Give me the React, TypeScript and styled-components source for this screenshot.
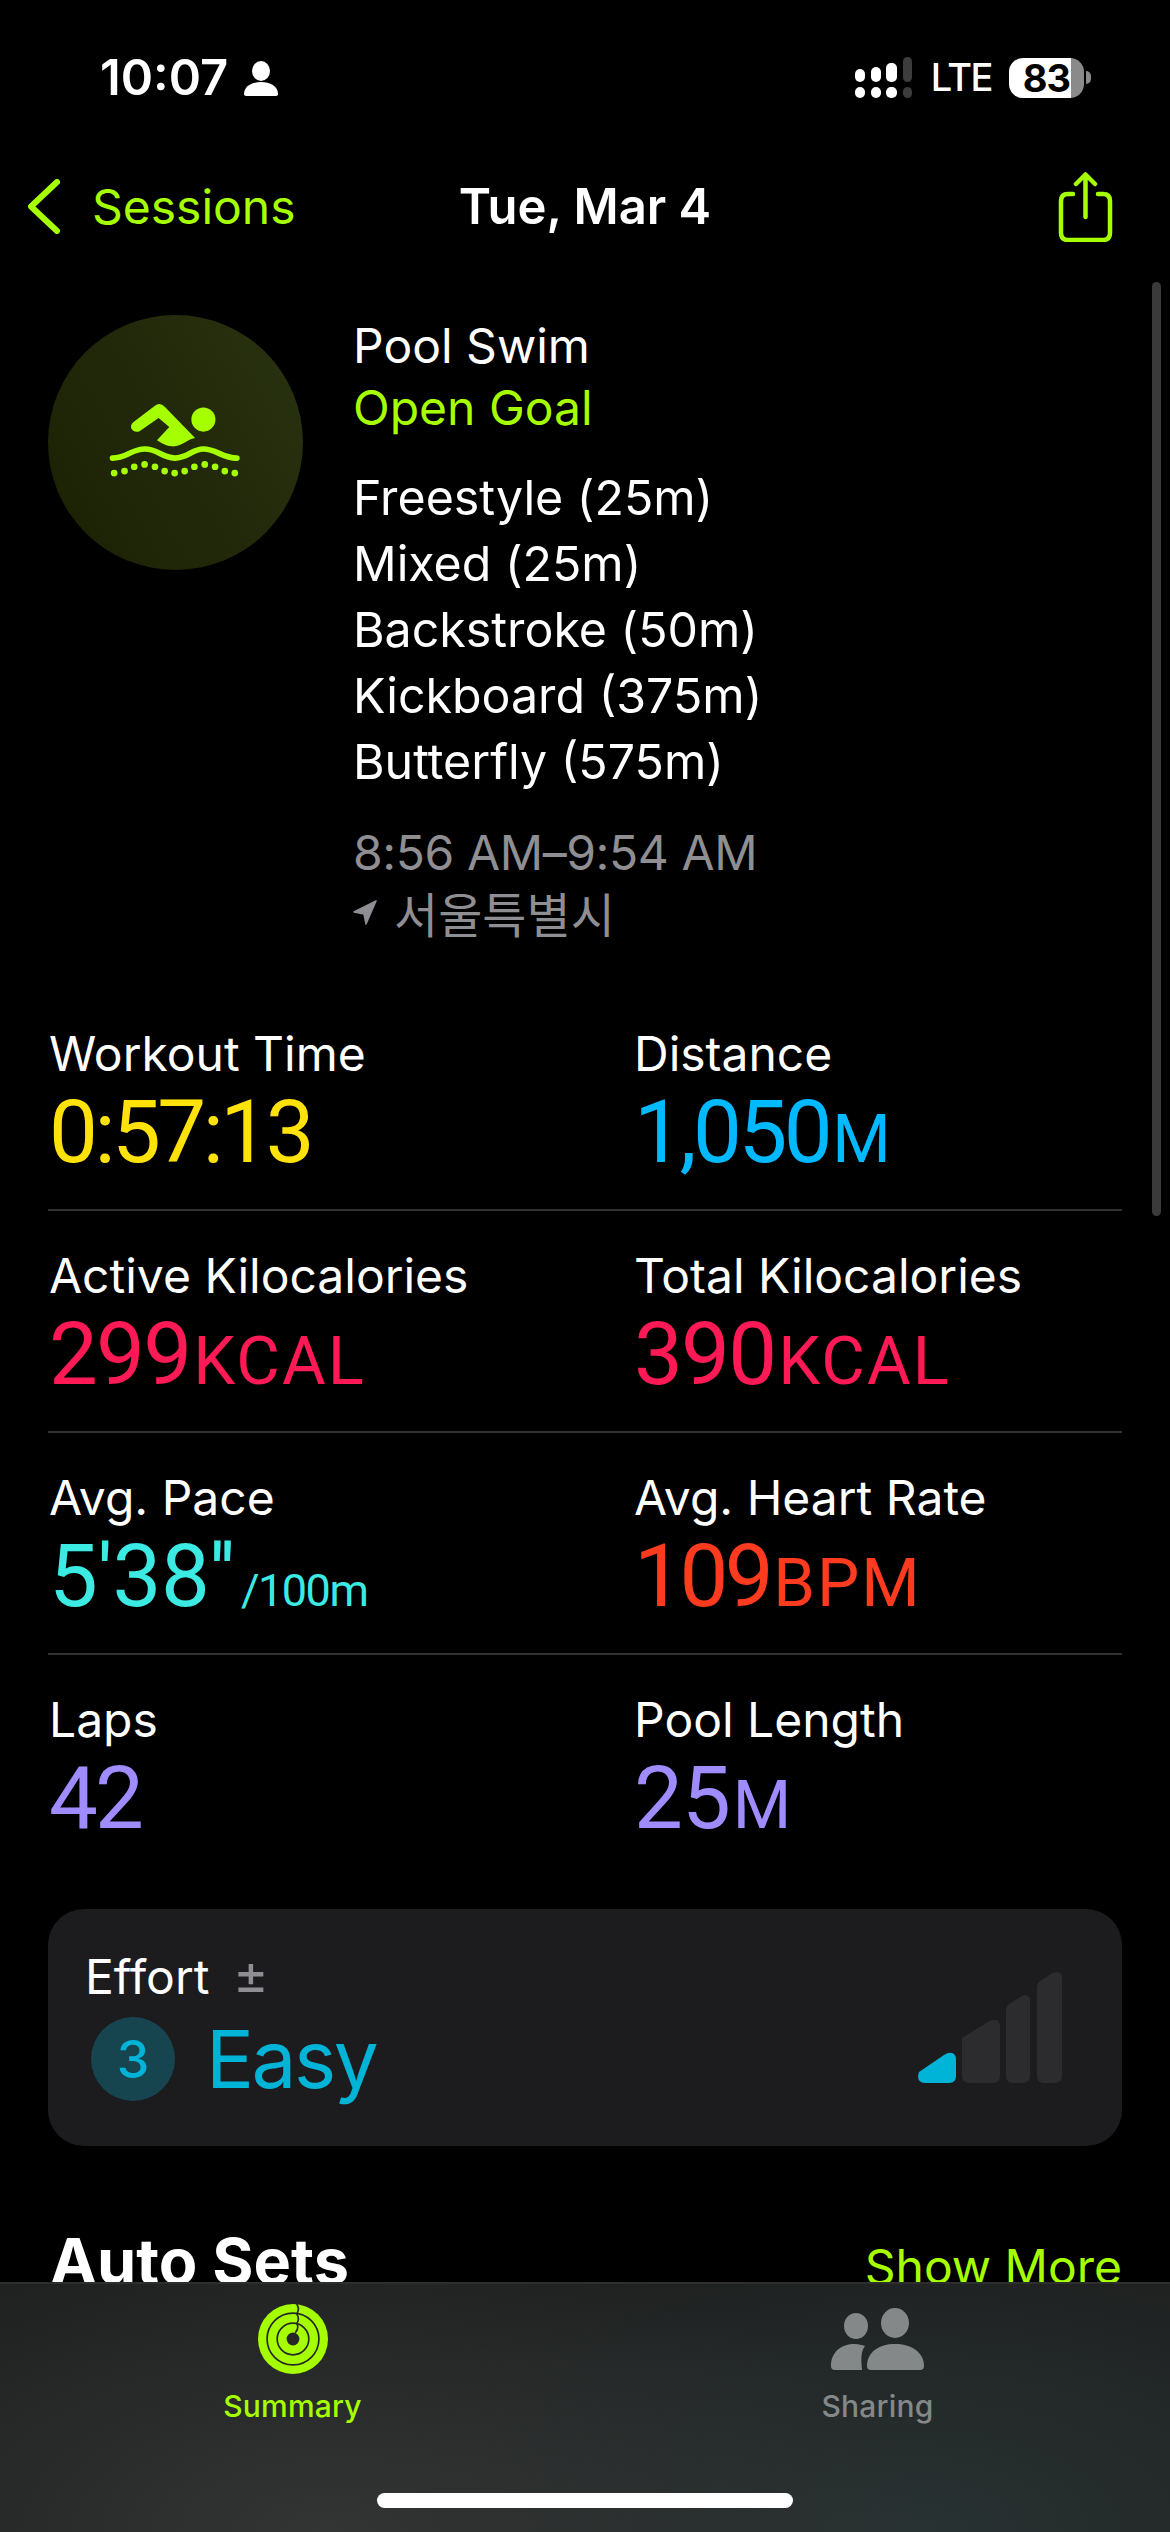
import React from "react";
import styled, { createGlobalStyle } from "styled-components";

const GREEN = "#a6ff00";
const SANS = `Inter, "Noto Sans CJK KR", sans-serif`;
const NUM = `Roboto, Inter, sans-serif`;

const strokes = ["Freestyle (25m)", "Mixed (25m)", "Backstroke (50m)", "Kickboard (375m)", "Butterfly (575m)"];

const metricRows = [
  [
    { label: "Workout Time", value: "0:57:13", unit: "", color: "#ffe20a", track: -3.5 },
    { label: "Distance", value: "1,050", unit: "M", color: "#00b9ff", track: -3.5 },
  ],
  [
    { label: "Active Kilocalories", value: "299", unit: "KCAL", color: "#ff1a55", track: -1.8 },
    { label: "Total Kilocalories", value: "390", unit: "KCAL", color: "#ff1a55", track: -1.8 },
  ],
  [
    { label: "Avg. Pace", value: "5'38''", unit: "", per: "/100m", color: "#3ceae4", track: -0.3 },
    { label: "Avg. Heart Rate", value: "109", unit: "BPM", color: "#ff3b1f", track: -3.5 },
  ],
  [
    { label: "Laps", value: "42", unit: "", color: "#a08cff", track: -3 },
    { label: "Pool Length", value: "25", unit: "M", color: "#a08cff", track: -1 },
  ],
];

const dots = [
  [253, 548], [284, 542], [313, 529], [344, 522], [375, 529], [404, 542], [434, 548],
  [464, 542], [493, 529], [524, 522], [555, 529], [584, 542], [614, 548],
];

const SignalIcon = () => (
  <svg width="57" height="41" viewBox="0 0 57 41">
    <g fill="#fff">
      <rect x="0" y="12" width="10" height="13" rx="5" />
      <rect x="0" y="30" width="10" height="11" rx="5" />
      <rect x="16" y="10" width="10" height="15" rx="5" />
      <rect x="16" y="30" width="10" height="11" rx="5" />
      <rect x="31" y="6" width="11" height="19" rx="5" />
      <rect x="31" y="30" width="11" height="11" rx="5" />
    </g>
    <g fill="#3c3c3c">
      <rect x="48" y="0" width="9" height="25" rx="4.5" />
      <rect x="48" y="30" width="9" height="11" rx="4.5" />
    </g>
  </svg>
);

const PersonIcon = () => (
  <svg width="34" height="35" viewBox="0 0 34 35" fill="#fff">
    <ellipse cx="17" cy="10" rx="9" ry="10" />
    <path d="M0 33C0 25 8 21 17 21C26 21 34 25 34 33Q34 35 32 35H2Q0 35 0 33Z" />
  </svg>
);

const SwimIcon = () => (
  <svg width="100%" height="100%" viewBox="55 75 763 763" fill={GREEN}>
    <path d="M310 396L374 347Q390 335 405 350L495 443C470 447 455 470 425 468C405 466 395 458 381 450L418 410L386 383L330 422C310 432 294 410 310 396Z" />
    <circle cx="520" cy="388" r="36" />
    <path
      d="M248 503C290 503 305 476 345 476C385 476 395 503 434 503C475 503 485 476 520 476C560 476 575 503 620 503"
      fill="none"
      stroke={GREEN}
      strokeWidth="17"
      strokeLinecap="round"
    />
    {dots.map(([x, y]) => (
      <circle key={x} cx={x} cy={y} r="10" />
    ))}
  </svg>
);

const EffortBars = () => (
  <svg width="144" height="111" viewBox="0 0 144 111">
    <path fill="#00b4d8" d="M1 100L26 83Q32 79 36 82Q38 84 38 88V104Q38 111 31 111H7Q0 111 0 104Z" />
    <g fill="#2c2c2e">
      <path d="M44 66L70 50Q76 46 80 49Q82 51 82 55V104Q82 111 75 111H51Q44 111 44 104Z" />
      <path d="M88 38Q88 35 90 33L102 25Q108 21 111 25Q112 27 112 30V104Q112 111 105 111H95Q88 111 88 104Z" />
      <path d="M119 15Q119 12 121 10L133 2Q139 -2 143 2Q144 4 144 7V104Q144 111 137 111H126Q119 111 119 104Z" />
    </g>
  </svg>
);

const RingsIcon = () => (
  <svg width="70" height="70" viewBox="0 0 208 208">
    <circle cx="104" cy="104" r="104" fill={GREEN} />
    <g fill="none" stroke="#262828" strokeWidth="5">
      <circle cx="104" cy="104" r="77" />
      <circle cx="104" cy="104" r="47" />
      <path d="M116 2Q124 14 116 28M116 31Q124 44 116 57M116 60Q122 70 112 84" strokeLinecap="round" />
    </g>
    <circle cx="104" cy="104" r="19" fill="#262828" />
  </svg>
);

const SharingIcon = () => (
  <svg width="93" height="62" viewBox="0 0 93 62" fill="#858888">
    <ellipse cx="25" cy="18" rx="12" ry="13" />
    <ellipse cx="64" cy="15" rx="14" ry="15" />
    <path d="M36 58C36 44 48 36 64 36C80 36 93 44 93 58Q93 62 89 62H40Q36 62 36 58Z" />
    <path d="M0 58C0 44 10 36 24 36C28 36 31 37 34 38C30 43 30 50 31 62H4Q0 62 0 58Z" />
  </svg>
);

export default function App() {
  return (
    <Screen>
      <GlobalStyle />
      <StatusBar>
        <StatusLeft>
          <Clock>10:07</Clock>
          <PersonIcon />
        </StatusLeft>
        <StatusRight>
          <SignalIcon />
          <Network>LTE</Network>
          <BatteryWrap>
            <Battery>83</Battery>
            <BatteryNub />
          </BatteryWrap>
        </StatusRight>
      </StatusBar>

      <NavBar>
        <BackLink>
          <svg width="32" height="55" viewBox="0 0 32 55" fill="none" stroke={GREEN} strokeWidth="6" strokeLinecap="round" strokeLinejoin="round">
            <path d="M29 3L3 27.5L29 52" />
          </svg>
          <span>Sessions</span>
        </BackLink>
        <NavTitle>Tue, Mar 4</NavTitle>
        <ShareButton>
          <svg width="55" height="70" viewBox="0 0 55 70" fill="none" stroke={GREEN} strokeWidth="4.5" strokeLinecap="round" strokeLinejoin="round">
            <path d="M15 22H10Q3 22 3 29V61Q3 68 10 68H45Q52 68 52 61V29Q52 22 45 22H40" />
            <path d="M27.5 3V45M18 12L27.5 2.5L37 12" />
          </svg>
        </ShareButton>
      </NavBar>

      <Content>
        <Summary>
          <WorkoutBadge>
            <SwimIcon />
          </WorkoutBadge>
          <SummaryText>
            <SummaryLine>Pool Swim</SummaryLine>
            <SummaryLine $accent>Open Goal</SummaryLine>
            <StrokeList>
              {strokes.map((s) => (
                <StrokeItem key={s}>{s}</StrokeItem>
              ))}
            </StrokeList>
            <TimeRange>8:56 AM–9:54 AM</TimeRange>
            <Place>
              <svg width="24" height="25" viewBox="0 0 24 25" fill="#8e8e93" stroke="#8e8e93" strokeWidth="1.5" strokeLinejoin="round">
                <path d="M23 1L1 12L11 14L13 24Z" />
              </svg>
              <span>서울특별시</span>
            </Place>
          </SummaryText>
        </Summary>

        <Metrics>
          {metricRows.map((row) => (
            <MetricRow key={row[0].label}>
              {row.map((m) => (
                <div key={m.label}>
                  <MetricLabel>{m.label}</MetricLabel>
                  <MetricValue $color={m.color} $track={m.track}>
                    {m.value}
                    {m.unit && <MetricUnit>{m.unit}</MetricUnit>}
                    {m.per && <MetricPer>{m.per}</MetricPer>}
                  </MetricValue>
                </div>
              ))}
            </MetricRow>
          ))}
        </Metrics>

        <EffortCard>
          <div>
            <EffortHead>
              Effort <EffortDelta>±</EffortDelta>
            </EffortHead>
            <EffortScore>
              <ScoreCircle>3</ScoreCircle>
              <ScoreText>Easy</ScoreText>
            </EffortScore>
          </div>
          <BarsSlot>
            <EffortBars />
          </BarsSlot>
        </EffortCard>

        <SectionHead>
          <SectionTitle>Auto Sets</SectionTitle>
          <ShowMore>Show More</ShowMore>
        </SectionHead>
      </Content>

      <ScrollThumb />

      <TabBar>
        <Tabs>
          <Tab $active>
            <TabIcon>
              <RingsIcon />
            </TabIcon>
            <TabLabel>Summary</TabLabel>
          </Tab>
          <Tab>
            <TabIcon>
              <SharingIcon />
            </TabIcon>
            <TabLabel>Sharing</TabLabel>
          </Tab>
        </Tabs>
        <HomeIndicator />
      </TabBar>
    </Screen>
  );
}

const GlobalStyle = createGlobalStyle`
  html, body {
    margin: 0;
    padding: 0;
    background: #000;
  }
  * {
    box-sizing: border-box;
  }
`;

const Screen = styled.div`
  position: relative;
  width: 1170px;
  height: 2532px;
  display: flex;
  flex-direction: column;
  overflow: hidden;
  background: #000;
  color: #fff;
  font-family: ${SANS};
`;

const StatusBar = styled.div`
  height: 151px;
  flex: none;
  display: flex;
  justify-content: space-between;
  align-items: flex-start;
  padding: 0 79px 0 100px;
`;

const StatusLeft = styled.div`
  display: flex;
  align-items: center;
  gap: 16px;
  margin-top: 48px;
`;

const Clock = styled.div`
  font-size: 49px;
  line-height: 60px;
  font-weight: 600;
`;

const StatusRight = styled.div`
  display: flex;
  align-items: center;
  gap: 19px;
  margin-top: 57px;
  height: 41px;
`;

const Network = styled.div`
  font-size: 38px;
  font-weight: 500;
  line-height: 41px;
  letter-spacing: -1.5px;
  margin-right: -2px;
`;

const BatteryWrap = styled.div`
  display: flex;
  align-items: center;
  gap: 2px;
`;

const Battery = styled.div`
  width: 75px;
  height: 40px;
  border-radius: 14px;
  background: linear-gradient(to right, #fff 83%, #8a8a8a 83%);
  color: #000;
  font-size: 38px;
  font-weight: 700;
  line-height: 40px;
  letter-spacing: -1px;
  text-align: center;
`;

const BatteryNub = styled.div`
  width: 5px;
  height: 13px;
  border-radius: 0 6px 6px 0;
  background: #8a8a8a;
`;

const NavBar = styled.div`
  height: 111px;
  flex: none;
  display: grid;
  grid-template-columns: 1fr auto 1fr;
  align-items: center;
  padding: 0 28px;
`;

const BackLink = styled.div`
  display: flex;
  align-items: center;
  gap: 32px;
  color: ${GREEN};
  font-size: 48px;
  line-height: 60px;
`;

const NavTitle = styled.div`
  font-size: 49px;
  line-height: 60px;
  font-weight: 600;
`;

const ShareButton = styled.div`
  display: flex;
  justify-content: flex-end;
  margin-right: 29px;
`;

const Content = styled.div`
  flex: 1;
  min-height: 0;
  overflow: hidden;
  padding: 53px 48px 0;
`;

const Summary = styled.div`
  display: flex;
  gap: 50px;
  align-items: flex-start;
`;

const WorkoutBadge = styled.div`
  width: 255px;
  height: 255px;
  flex: none;
  border-radius: 50%;
  background: linear-gradient(60deg, #1b2003, #293211);
`;

const SummaryText = styled.div`
  margin-top: 0;
`;

const SummaryLine = styled.div<{ $accent?: boolean }>`
  font-size: 48px;
  line-height: 62px;
  color: ${(p) => (p.$accent ? GREEN : "#fff")};
`;

const StrokeList = styled.div`
  margin-top: 26px;
`;

const StrokeItem = styled.div`
  font-size: 48.3px;
  line-height: 66px;
`;

const TimeRange = styled.div`
  margin-top: 26px;
  font-size: 48px;
  line-height: 64px;
  color: #8e8e93;
  letter-spacing: -0.4px;
`;

const Place = styled.div`
  display: flex;
  align-items: center;
  gap: 17px;
  height: 54px;
  color: #8e8e93;
  font-size: 48px;
`;

const Metrics = styled.div`
  margin-top: 85px;
`;

const MetricRow = styled.div`
  display: grid;
  grid-template-columns: 585px 1fr;
  padding: 0 0 29px 1px;
  border-bottom: 2px solid #323234;

  & + & {
    margin-top: 35px;
  }

  &:last-child {
    padding-bottom: 0;
    border-bottom: none;
  }
`;

const MetricLabel = styled.div`
  font-size: 48px;
  line-height: 60px;
`;

const MetricValue = styled.div<{ $color: string; $track: number }>`
  height: 96px;
  font-family: ${NUM};
  font-size: 87px;
  line-height: 96px;
  letter-spacing: ${(p) => p.$track}px;
  color: ${(p) => p.$color};
  white-space: nowrap;
`;

const MetricUnit = styled.span`
  font-size: 67px;
  line-height: 0;
  letter-spacing: 2px;
  margin-left: 3px;
`;

const MetricPer = styled.span`
  font-size: 45px;
  line-height: 0;
  letter-spacing: -1.5px;
  margin-left: 6px;
`;

const EffortCard = styled.div`
  margin-top: 63px;
  height: 237px;
  display: flex;
  justify-content: space-between;
  align-items: flex-start;
  padding: 38px 60px 0 37px;
  border-radius: 36px;
  background: #1c1c1e;
`;

const EffortHead = styled.div`
  font-size: 48px;
  line-height: 60px;
`;

const EffortDelta = styled.span`
  margin-left: 10px;
  font-size: 54px;
  line-height: 0;
  color: #8e8e93;
`;

const EffortScore = styled.div`
  display: flex;
  align-items: center;
  gap: 31px;
  margin: 10px 0 0 6px;
`;

const ScoreCircle = styled.div`
  width: 84px;
  height: 84px;
  border-radius: 50%;
  display: flex;
  align-items: center;
  justify-content: center;
  background: #17454f;
  color: #00b4d8;
  font-size: 52px;
  font-weight: 500;
`;

const ScoreText = styled.div`
  color: #00b4d8;
  font-size: 80px;
  line-height: 84px;
  letter-spacing: -2.5px;
`;

const BarsSlot = styled.div`
  margin-top: 25px;
`;

const SectionHead = styled.div`
  margin-top: 80px;
  display: flex;
  justify-content: space-between;
  align-items: baseline;
`;

const SectionTitle = styled.div`
  font-size: 63px;
  line-height: 70px;
  font-weight: 700;
  margin-left: 2px;
`;

const ShowMore = styled.div`
  font-size: 48px;
  color: ${GREEN};
`;

const ScrollThumb = styled.div`
  position: absolute;
  top: 282px;
  right: 9px;
  width: 9px;
  height: 934px;
  border-radius: 5px;
  background: #3a3a3a;
`;

const TabBar = styled.div`
  height: 250px;
  flex: none;
  display: flex;
  flex-direction: column;
  border-top: 2px solid #2e2e2e;
  background:
    radial-gradient(600px 300px at 28% 100%, #333534 0%, rgba(51, 53, 52, 0) 100%),
    radial-gradient(600px 300px at 78% 100%, #283232 0%, rgba(40, 50, 50, 0) 100%),
    #1f2020;
`;

const Tabs = styled.div`
  display: grid;
  grid-template-columns: 1fr 1fr;
  padding-top: 20px;
`;

const Tab = styled.div<{ $active?: boolean }>`
  display: flex;
  flex-direction: column;
  align-items: center;
  color: ${(p) => (p.$active ? GREEN : "#858888")};
`;

const TabIcon = styled.div`
  height: 70px;
  display: flex;
  align-items: center;
`;

const TabLabel = styled.div`
  margin-top: 14px;
  font-size: 30px;
  line-height: 36px;
  font-weight: 500;
  letter-spacing: 0.2px;
`;

const HomeIndicator = styled.div`
  width: 416px;
  height: 15px;
  margin: 69px auto 0;
  border-radius: 8px;
  background: #fff;
`;
